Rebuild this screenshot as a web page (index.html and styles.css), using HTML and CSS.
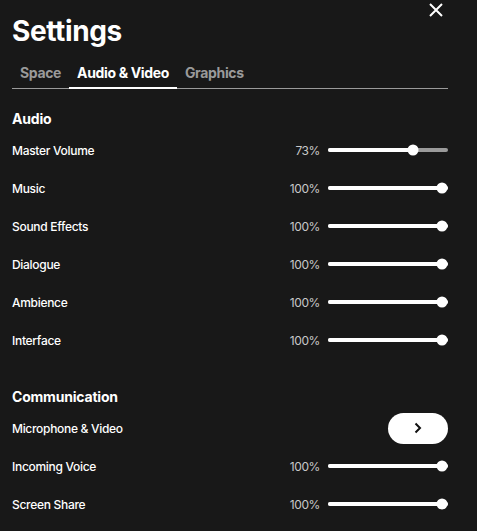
FILE: index.html
```html
<!DOCTYPE html>
<html>
<head>
<meta charset="utf-8">
<link rel="stylesheet" href="styles.css">
</head>
<body>
<div class="panel">
  <button class="close" aria-label="Close">
    <svg width="14" height="14" viewBox="0 0 14 14"><path d="M1 1L13 13M13 1L1 13" stroke="#fff" stroke-width="2" fill="none"/></svg>
  </button>
  <h1 class="title">Settings</h1>
  <div class="tabs">
    <div class="tab">Space</div>
    <div class="tab active">Audio &amp; Video</div>
    <div class="tab">Graphics</div>
  </div>

  <div class="section first">
    <h2 class="section-title">Audio</h2>
    <div class="row"><span class="label">Master Volume</span><div class="control"><span class="pct">73%</span><div class="slider"><div class="fill" style="width:73%"></div><div class="thumb" style="left:calc(5.5px + 0.73 * 108.5px)"></div></div></div></div>
    <div class="row"><span class="label">Music</span><div class="control"><span class="pct">100%</span><div class="slider"><div class="fill" style="width:100%"></div><div class="thumb" style="left:calc(5.5px + 108.5px)"></div></div></div></div>
    <div class="row"><span class="label">Sound Effects</span><div class="control"><span class="pct">100%</span><div class="slider"><div class="fill" style="width:100%"></div><div class="thumb" style="left:calc(5.5px + 108.5px)"></div></div></div></div>
    <div class="row"><span class="label">Dialogue</span><div class="control"><span class="pct">100%</span><div class="slider"><div class="fill" style="width:100%"></div><div class="thumb" style="left:calc(5.5px + 108.5px)"></div></div></div></div>
    <div class="row"><span class="label">Ambience</span><div class="control"><span class="pct">100%</span><div class="slider"><div class="fill" style="width:100%"></div><div class="thumb" style="left:calc(5.5px + 108.5px)"></div></div></div></div>
    <div class="row"><span class="label">Interface</span><div class="control"><span class="pct">100%</span><div class="slider"><div class="fill" style="width:100%"></div><div class="thumb" style="left:calc(5.5px + 108.5px)"></div></div></div></div>
  </div>

  <div class="section second">
    <h2 class="section-title">Communication</h2>
    <div class="row"><span class="label">Microphone &amp; Video</span><div class="control"><button class="go" aria-label="Open"><svg width="8" height="12" viewBox="0 0 8 12"><path d="M1.5 1.5L6 6L1.5 10.5" stroke="#111" stroke-width="2" fill="none"/></svg></button></div></div>
    <div class="row"><span class="label">Incoming Voice</span><div class="control"><span class="pct">100%</span><div class="slider"><div class="fill" style="width:100%"></div><div class="thumb" style="left:calc(5.5px + 108.5px)"></div></div></div></div>
    <div class="row"><span class="label">Screen Share</span><div class="control"><span class="pct">100%</span><div class="slider"><div class="fill" style="width:100%"></div><div class="thumb" style="left:calc(5.5px + 108.5px)"></div></div></div></div>
  </div>
</div>
</body>
</html>
```

FILE: styles.css
```css
html, body {
  margin: 0;
  padding: 0;
  background: #181818;
}
body {
  color: #fff;
  font-family: Inter, "Noto Sans", sans-serif;
  overflow: hidden;
}
.panel {
  position: relative;
  padding: 14px 29px 0 12px;
}
.close {
  position: absolute;
  top: 3px;
  left: 429px;
  width: 14px;
  height: 14px;
  padding: 0;
  border: 0;
  background: none;
  display: block;
}
.close svg { display: block; }
.title {
  margin: 0;
  font-size: 28px;
  line-height: 34px;
  font-weight: 700;
  letter-spacing: -0.4px;
}
.tabs {
  display: flex;
  margin-top: 8px;
  border-bottom: 1px solid #9a9a9a;
}
.tab {
  padding: 8px 8px 6px;
  line-height: 17px;
  font-size: 14px;
  font-weight: 700;
  color: #9a9a9a;
  border-bottom: 2px solid transparent;
  margin-bottom: -1px;
  letter-spacing: -0.35px;
}
.tab.active {
  color: #fff;
  border-bottom-color: #fff;
}
.section.first { margin-top: 18px; }
.section.second { margin-top: 26px; }
.section-title {
  margin: 0;
  font-size: 14px;
  line-height: 24px;
  font-weight: 700;
  letter-spacing: -0.2px;
}
.row {
  height: 38px;
  display: flex;
  align-items: center;
  justify-content: space-between;
}
.label {
  font-size: 12px;
  font-weight: 500;
  letter-spacing: -0.3px;
}
.control {
  display: flex;
  align-items: center;
  gap: 8px;
}
.pct {
  font-size: 12px;
  color: #c8c8c8;
  letter-spacing: -0.4px;
}
.slider {
  position: relative;
  width: 120px;
  height: 4px;
  border-radius: 2px;
  background: #9a9a9a;
}
.fill {
  height: 4px;
  border-radius: 2px;
  background: #fff;
}
.thumb {
  position: absolute;
  top: 50%;
  width: 11px;
  height: 11px;
  border-radius: 50%;
  background: #fff;
  transform: translate(-50%, -50%);
}
.go {
  width: 60px;
  height: 31px;
  border: 0;
  border-radius: 16px;
  background: #fff;
  display: flex;
  align-items: center;
  justify-content: center;
  padding: 0;
}
.go svg { display: block; }
```
